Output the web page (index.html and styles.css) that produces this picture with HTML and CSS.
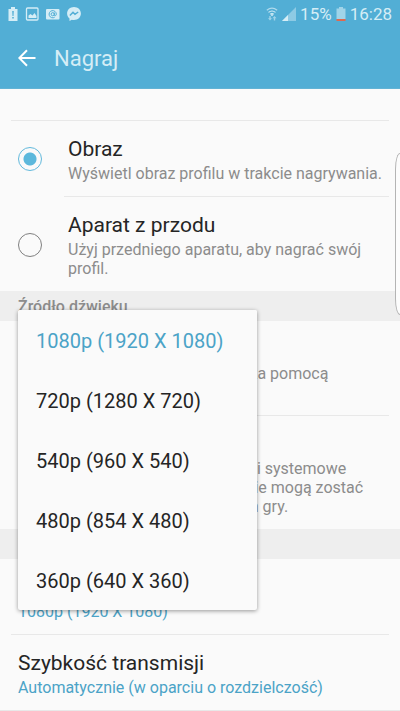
FILE: index.html
```html
<!DOCTYPE html>
<html lang="pl">
<head>
<meta charset="utf-8">
<meta name="viewport" content="width=device-width, initial-scale=1">
<title>Nagraj</title>
<link rel="stylesheet" href="styles.css">
</head>
<body>
<header class="top">
  <div class="status">
    <div class="status-group notifications">
      <svg width="10" height="14" viewBox="0 0 10 14" aria-hidden="true"><path fill="currentColor" d="M3 0h4v2h2.500v12h-9V2H3z"/><path fill="#52aed5" d="M4.200 4h1.600l-.3 5h-1zM4.200 10h1.600v1.600H4.200z"/></svg>
      <svg width="14" height="14" viewBox="0 0 14 14" aria-hidden="true"><rect x="1.500" y="1" width="11.500" height="12" rx="1" fill="none" stroke="currentColor" stroke-width="1.300"/><path fill="currentColor" d="M3.500 11V8.500L5.500 7l2 1.500L9.500 6l2 3v2z"/></svg>
      <svg width="14" height="14" viewBox="0 0 14 14" aria-hidden="true"><rect x="0" y="2" width="13.500" height="10.500" rx="1" fill="currentColor"/><g fill="none" stroke="#52aed5" stroke-width="1"><circle cx="6.700" cy="7.200" r="1.600"/><path d="M8.300 5.500v2.500c0 1.200 2 1 2-.8a3.600 3.600 0 1 0-1.600 3"/></g></svg>
      <svg width="14" height="14" viewBox="0 0 14 14" aria-hidden="true"><path fill="currentColor" d="M7 0C3.100 0 .1 2.800.1 6.500c0 2 .9 3.700 2.400 4.900V14l2.300-1.300c.7.2 1.400.3 2.200.3 3.900 0 6.900-2.800 6.900-6.500S10.900 0 7 0z"/><path fill="none" stroke="#52aed5" stroke-width="1.500" d="M2.900 8.500 6 5.300l2 2L11.200 5"/></svg>
    </div>
    <div class="status-group">
      <svg width="12" height="14" viewBox="0 0 12 14" aria-hidden="true"><g fill="none" stroke="currentColor" stroke-width="1.200"><path opacity=".7" d="M.8 3.200q5.200-4.200 10.400 0"/><path d="M2.500 5.400q3.500-2.800 7 0M4.300 7.300q1.700-1.300 3.400 0"/></g><path fill="currentColor" d="M6 7 7.300 8 6 9.200 4.700 8z"/><path fill="currentColor" opacity=".6" d="m4 13.500-2-2.300h1.300V9h1.400v2.200H6zM8.500 9l2 2.300H9.200v2.200H7.800v-2.200H6.500z"/></svg>
      <svg width="14" height="14" viewBox="0 0 14 14" aria-hidden="true"><path fill="currentColor" opacity=".45" d="M14 0v14H0z"/><path fill="currentColor" d="M6 8v6H0z"/></svg>
      <span>15%</span>
      <svg width="10" height="14" viewBox="0 0 10 14" aria-hidden="true"><path fill="currentColor" opacity=".6" d="M3 0h4v1.500h2.500V12h-9V1.500H3z"/><path fill="#e0694f" d="M.5 12h9v2h-9z"/></svg>
      <span>16:28</span>
    </div>
  </div>
  <div class="appbar">
    <button class="back" type="button" aria-label="Wstecz"><svg width="18" height="18" viewBox="0 0 18 18" aria-hidden="true"><path fill="none" stroke="#fff" stroke-width="2" d="M17.500 9H1.500M9 1.200 1.300 9 9 16.800"/></svg></button>
    <h1>Nagraj</h1>
  </div>
</header>
<main class="settings">
  <div class="edge-handle"></div>
  <div class="lead"></div>
  <label class="row choice">
    <input type="radio" name="profile" checked>
    <span class="text"><span class="title">Obraz</span><span class="sub">Wyświetl obraz profilu w trakcie nagrywania.</span></span>
  </label>
  <label class="row choice inset">
    <input type="radio" name="profile">
    <span class="text"><span class="title">Aparat z przodu</span><span class="sub">Użyj przedniego aparatu, aby nagrać swój profil.</span></span>
  </label>
  <h2 class="section">Źródło dźwięku</h2>
  <label class="row choice plain">
    <input type="radio" name="audio" checked>
    <span class="text"><span class="title">Mikrofon</span><span class="sub">Nagraj dźwięki otoczenia za pomocą<br>mikrofonu.</span></span>
  </label>
  <label class="row choice inset">
    <input type="radio" name="audio">
    <span class="text"><span class="title">Dźwięk gry</span><span class="sub">Nagrywaj całą grę i dźwięki systemowe<br>urządzenia. Inne dźwięki nie mogą zostać<br>zapisane w ramach nagrań gry.</span></span>
  </label>
  <h2 class="section">Wideo</h2>
  <div class="row plain resolution">
    <label class="title" for="resolution">Rozdzielczość</label>
    <span class="sub value">1080p (1920 X 1080)</span>
    <select class="menu" id="resolution" size="5">
      <option selected>1080p (1920 X 1080)</option>
      <option>720p (1280 X 720)</option>
      <option>540p (960 X 540)</option>
      <option>480p (854 X 480)</option>
      <option>360p (640 X 360)</option>
    </select>
  </div>
  <div class="row last">
    <span class="title">Szybkość transmisji</span>
    <span class="sub value">Automatycznie (w oparciu o rozdzielczość)</span>
  </div>
</main>
</body>
</html>
```
FILE: styles.css
```css
* {
  box-sizing: border-box;
}

body {
  margin: 0;
  background: #fafafa;
  color: #252525;
  font-family: Roboto, "Liberation Sans", sans-serif;
}

.top {
  background: #52aed5;
  color: #d5edf6;
  border-bottom: 1px solid #62b3d5;
}

.status {
  display: flex;
  justify-content: space-between;
  align-items: center;
  height: 28px;
  padding: 0 8px;
  font-size: 17px;
}

.status-group {
  display: flex;
  align-items: center;
  gap: 4px;
}

.notifications {
  gap: 7px;
}

.appbar {
  display: flex;
  align-items: center;
  height: 60px;
  padding: 0 18px;
  gap: 18px;
}

.back {
  display: flex;
  padding: 0;
  border: 0;
  background: none;
}

h1 {
  margin: 0;
  font-size: 22px;
  font-weight: 400;
}

.settings {
  position: relative;
}

.edge-handle {
  position: absolute;
  top: 64px;
  right: 0;
  width: 5px;
  height: 162px;
  border: 1px solid #b4b4b4;
  border-right: 0;
  border-radius: 5px 0 0 5px / 16px 0 0 16px;
  background: #fcfcfc;
}

.lead {
  height: 31px;
}

.row {
  display: flex;
  flex-direction: column;
  position: relative;
  padding: 15px 11px 13px 18px;
}

.row::before {
  content: "";
  position: absolute;
  top: 0;
  left: 11px;
  right: 11px;
  height: 1px;
  background: #e8e8e8;
}

.row.inset::before {
  left: 64px;
}

.row.plain {
  padding-top: 14px;
}

.row.plain::before {
  display: none;
}

.row.last {
  border-bottom: 1px solid #e8e8e8;
}

.choice {
  flex-direction: row;
  align-items: center;
  gap: 26px;
}

.choice input {
  appearance: none;
  flex: none;
  width: 24px;
  height: 24px;
  margin: 0;
  border: 1px solid #808080;
  border-radius: 50%;
}

.choice input:checked {
  border-color: #62b9dc;
  background: radial-gradient(circle, #5cb8dc 6px, transparent 7px);
}

.text {
  flex: 1;
}

.title,
.sub {
  display: block;
}

.title {
  font-size: 21px;
  line-height: 29px;
}

.sub {
  color: #8c8c8c;
  font-size: 16px;
  line-height: 19px;
}

.value {
  color: #4ba3c7;
}

.section {
  height: 30px;
  margin: 0;
  padding: 1px 18px 0;
  background: #eeeeee;
  color: #8c8c8c;
  font-size: 16px;
  font-weight: 500;
  line-height: 30px;
}

.menu {
  position: absolute;
  left: 18px;
  bottom: 24px;
  z-index: 1;
  width: 239px;
  height: 300px;
  padding: 0;
  border: 0;
  border-radius: 2px;
  outline: 0;
  overflow: hidden;
  background: #fafafa;
  box-shadow: 0 1px 4px rgba(0, 0, 0, 0.4);
  color: #252525;
  font: 20px Roboto, "Liberation Sans", sans-serif;
}

.menu option {
  height: 60px;
  padding: 19px 18px;
}

.menu option:checked {
  background: linear-gradient(#fafafa, #fafafa);
  -webkit-text-fill-color: #4ba3c7;
}
```
